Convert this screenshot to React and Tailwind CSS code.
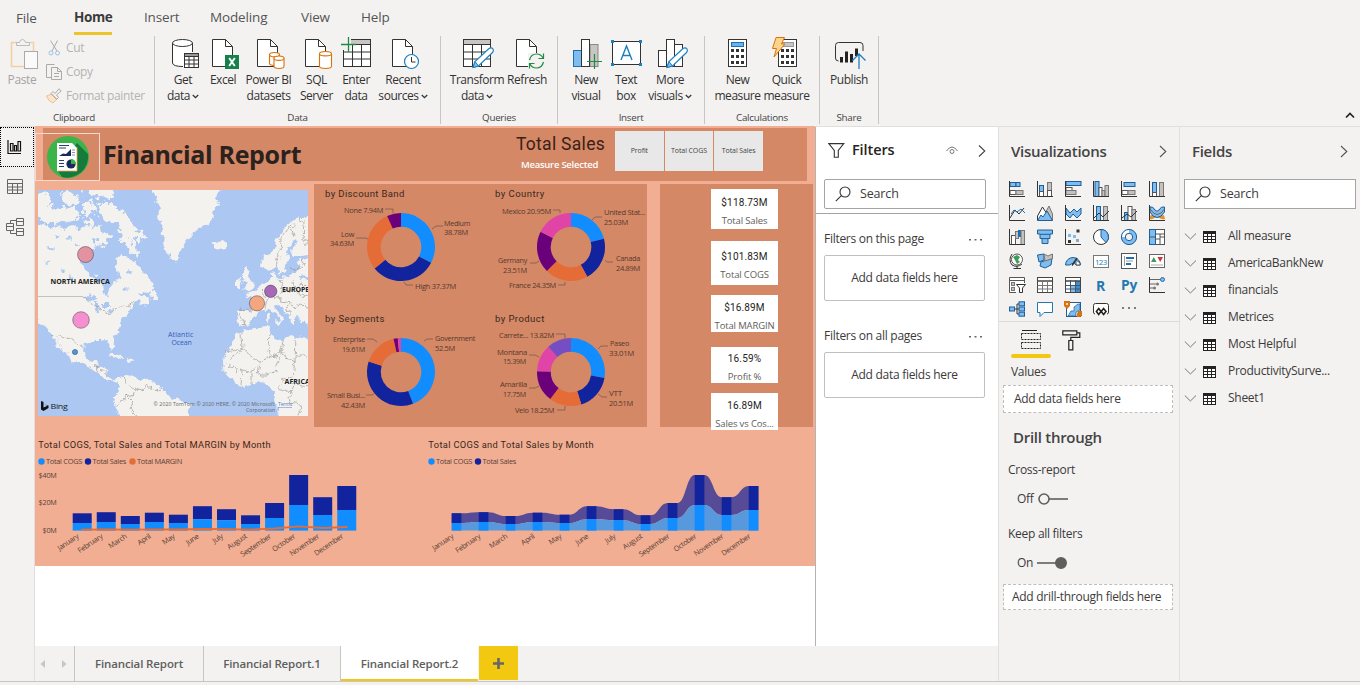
import React from "react";

const K = "#333";
const B = "#7fbcf0";
const G = "#c4c2c0";

/* ---------- shared bits ---------- */

function Chevron({ className = "", w = 8, h = 12, stroke = "#555" }) {
  return (
    <svg className={className} width={w} height={h} viewBox="0 0 8 12" fill="none" stroke={stroke} strokeWidth="1.1">
      <path d="M1 0.5 L6.8 6 L1 11.5" />
    </svg>
  );
}

function DownCaret() {
  return (
    <svg className="ml-[2px] inline-block" width="7" height="5" viewBox="0 0 7 5" fill="none" stroke="#333" strokeWidth="1.3">
      <path d="M0.8 1 L3.5 3.7 L6.2 1" />
    </svg>
  );
}

function SearchBox({ className }) {
  return (
    <div className={"flex items-center border border-[#a6a4a2] bg-white " + className}>
      <svg className="ml-[10px]" width="16" height="16" viewBox="0 0 16 16" fill="none" stroke="#333" strokeWidth="1.1">
        <circle cx="10" cy="6" r="5" />
        <path d="M6.4 9.6 L0.8 15.2" />
      </svg>
      <span className="ml-[9px] text-[12.5px] tracking-[-0.15px] text-[#3b3a39]">Search</span>
    </div>
  );
}

/* ---------- ribbon icons ---------- */

const Doc = ({ x = 0 }) => (
  <g transform={`translate(${x} 0)`} stroke={K} strokeWidth="1" fill="#fff">
    <path d="M0.5 1.5 H13.5 L20.5 8.5 V28.5 H0.5 Z" />
    <path d="M13.5 1.5 V8.5 H20.5" fill="none" />
  </g>
);

const Cyl = ({ x, y, w, h }) => (
  <g fill="#fff" stroke="#d9730d" strokeWidth="1.1">
    <path d={`M${x} ${y + 2.2} V${y + h - 2.2} Q${x} ${y + h} ${x + w / 2} ${y + h} Q${x + w} ${y + h} ${x + w} ${y + h - 2.2} V${y + 2.2}`} />
    <ellipse cx={x + w / 2} cy={y + 2.2} rx={w / 2} ry="2.2" />
  </g>
);

const Pencil = () => (
  <g>
    <path d="M10 29.5 L12 23.5 L26 10.5 Q28.5 9 30 11 Q31 13 29.5 14.5 L15.5 28 Z" fill="#fff" stroke="#1c7fc0" strokeWidth="1.2" />
    <path d="M10 29.5 L12 23.5 L15.5 28 Z" fill={B} stroke="#1c7fc0" />
  </g>
);

const Calc = ({ x = 0, top = "#69b2ee" }) => (
  <g transform={`translate(${x} 0)`}>
    <rect x="0.5" y="1.5" width="18" height="27" fill="#fff" stroke={K} />
    <rect x="3.5" y="4.5" width="12" height="4" fill={top} stroke={top === "#69b2ee" ? "#1c6fb0" : "#999"} />
    {[11, 17, 23].map((y) => [3, 8, 13].map((c) => <rect key={c + "-" + y} x={c} y={y} width="3" height="3" fill={K} />))}
  </g>
);

const Svg30 = ({ w = 30, children }) => (
  <svg width={w} height="32" viewBox={`0 0 ${w} 32`} fill="none" className="overflow-visible">
    {children}
  </svg>
);

const ribbonIcons = {
  get: (
    <Svg30 w={27}>
      <path d="M0.5 5 V25 Q2 28.5 10 28.5 H20.5 V5 Z" fill="#fff" />
      <path d="M0.5 5 V25 Q1 28.5 11 28.5 M20.5 5 V14" stroke={K} />
      <ellipse cx="10.5" cy="5" rx="10" ry="3.5" fill="#fff" stroke={K} />
      <rect x="12.5" y="15.5" width="14" height="14" fill="#fff" stroke={K} />
      <rect x="12.5" y="15.5" width="14" height="3" fill="#999" stroke={K} />
      <path d="M17 18.5 V29.5 M22 18.5 V29.5 M12.5 22 H26.5 M12.5 26 H26.5" stroke={K} />
    </Svg30>
  ),
  excel: (
    <Svg30 w={27}>
      <Doc />
      <rect x="13" y="17" width="14" height="14" fill="#15804a" />
      <path d="M17.2 20 L22.8 28 M22.8 20 L17.2 28" stroke="#fff" strokeWidth="1.9" />
    </Svg30>
  ),
  pbi: (
    <Svg30 w={27}>
      <Doc />
      <Cyl x={12.5} y={14.5} w={10} h={13} />
      <Cyl x={17} y={18} w={10} h={12.5} />
    </Svg30>
  ),
  sql: (
    <Svg30 w={27}>
      <Doc />
      <Cyl x={14.5} y={13.5} w={12} h={17} />
    </Svg30>
  ),
  enter: (
    <Svg30 w={28}>
      <rect x="0.5" y="1.5" width="27" height="27" fill="#fff" stroke={K} />
      <rect x="1" y="2" width="26" height="4" fill="#c8c6c4" />
      <path d="M0.5 6.5 H27.5 M0.5 14 H27.5 M0.5 21 H27.5 M9.5 6.5 V28.5 M18.5 6.5 V28.5" stroke={K} />
      <path d="M-2 -1 H8 V12 H-2 Z" fill="#f3f2f1" />
      <path d="M5.5 -1 V14 M-2 6.5 H13" stroke="#218a45" strokeWidth="1.3" />
    </Svg30>
  ),
  recent: (
    <Svg30 w={27}>
      <Doc />
      <circle cx="19.5" cy="23.5" r="7" fill="#fff" stroke="#1c7fc0" strokeWidth="1.2" />
      <path d="M19.5 19 V24 H23.5" stroke={K} />
    </Svg30>
  ),
  transform: (
    <Svg30 w={30}>
      <rect x="0.5" y="1.5" width="27" height="27" fill="#fff" stroke={K} />
      <rect x="1" y="2" width="26" height="4" fill="#c8c6c4" />
      <path d="M0.5 6.5 H27.5 M0.5 14 H27.5 M0.5 21 H27.5 M9.5 6.5 V28.5 M18.5 6.5 V28.5" stroke={K} />
      <Pencil />
    </Svg30>
  ),
  refresh: (
    <Svg30 w={27}>
      <Doc />
      <rect x="12" y="15" width="16" height="16" fill="#f3f2f1" />
      <path d="M13.5 22 Q15 16 20.5 16 Q25 16 27 20 M27.5 15.5 V20.5 H22.5 M27.5 24 Q26 30 20.5 30 Q16 30 14 26 M13.5 30.5 V25.5 H18.5" stroke="#218a45" strokeWidth="1.2" />
    </Svg30>
  ),
  newvis: (
    <Svg30 w={28}>
      <rect x="17" y="6.5" width="8" height="22" fill="#c8c6c4" stroke="#888" />
      <rect x="0.5" y="12.5" width="8" height="16" fill={B} stroke="#1c6fb0" />
      <rect x="8.5" y="1.5" width="8" height="27" fill="#fff" stroke={K} />
      <path d="M21.5 16 V31 M14 23.5 H29" stroke="#218a45" strokeWidth="1.2" />
    </Svg30>
  ),
  text: (
    <Svg30 w={31}>
      <rect x="1.5" y="3.5" width="28" height="23" fill="#fff" stroke={K} />
      {[[0, 2], [28, 2], [0, 25], [28, 25]].map(([a, b]) => (
        <rect key={a + "-" + b} x={a} y={b} width="3" height="3" fill="#1c7fc0" />
      ))}
      <path d="M10 22 L15.5 8 L21 22 M12 17.5 H19" stroke="#1c7fc0" strokeWidth="1.4" />
    </Svg30>
  ),
  more: (
    <Svg30 w={30}>
      <rect x="16.5" y="6.5" width="8" height="22" fill="#fff" stroke={K} />
      <rect x="0.5" y="12.5" width="8" height="16" fill="#fff" stroke={K} />
      <rect x="8.5" y="1.5" width="8" height="27" fill="#fff" stroke={K} />
      <g transform="translate(-1 0)"><Pencil /></g>
    </Svg30>
  ),
  calc: <Svg30 w={19}><Calc /></Svg30>,
  quick: (
    <Svg30 w={26}>
      <Calc x={6} top="#c8c6c4" />
      <path d="M4 -0.5 H12.5 L9.5 6 H13 L2 19 L4.5 10.5 H0.5 Z" fill="#fbd38a" stroke="#d9730d" />
    </Svg30>
  ),
  publish: (
    <Svg30 w={29}>
      <path d="M3.5 23 Q0.5 23 0.5 20 V7.5 Q0.5 4.5 3.5 4.5 H25 Q28 4.5 28 7.5 V13" stroke={K} />
      <path d="M6.5 24.5 V19 M11.5 24.5 V13.5 M16.5 24.5 V16 M21.5 18 V10.5" stroke="#222" strokeWidth="3" />
      <path d="M24 31 V16 M17.5 22.5 L24 16 L30.5 22.5" stroke="#1c7fc0" strokeWidth="1.3" />
    </Svg30>
  ),
};

function RibbonItem({ icon, lines, caret, width, shift = "pl-[4px]" }) {
  return (
    <div className={"flex shrink-0 flex-col items-center pt-[2px] " + width}>
      <div className={"h-[34px] " + shift}>{ribbonIcons[icon]}</div>
      {lines.map((l, i) => (
        <div key={l} className="h-[16px] whitespace-nowrap text-[12px] leading-[16px] tracking-[-0.45px] text-[#333]">
          {l}
          {caret && i === 1 ? <DownCaret /> : null}
        </div>
      ))}
    </div>
  );
}

function RibbonGroup({ label, width, pad, children }) {
  return (
    <div className={"flex h-[88px] shrink-0 flex-col border-r border-[#c8c6c4] " + width}>
      <div className={"flex h-[77px] " + pad}>{children}</div>
      <div className="text-center text-[9.8px] leading-[13px] text-[#444]">{label}</div>
    </div>
  );
}

function Ribbon() {
  return (
    <div className="flex h-[90px] items-start">
      <RibbonGroup label={<span className="pr-[6px]">Clipboard</span>} width="w-[155px]" pad="">
        <div className="flex w-[44px] flex-col items-center pt-[2px]">
          <div className="h-[34px] pl-[5px]">
            <svg width="29" height="32" viewBox="0 0 29 32" fill="none">
              <path d="M7 4.5 H1.5 V28.5 H14 M20 4.5 H23.5 V13" stroke="#f3cfa4" strokeWidth="1.6" />
              <path d="M6.5 7.5 V4.5 H9.5 Q10 1.5 12.5 1.5 Q15 1.5 15.5 4.5 H19.5 V7.5 Z" stroke="#bbb" />
              <rect x="14.5" y="13.5" width="13" height="17" fill="#fafafa" stroke="#aaa" />
            </svg>
          </div>
          <div className="text-[12px] leading-[16px] tracking-[-0.35px] text-[#a5a3a1]">Paste</div>
        </div>
        <div className="flex flex-col text-[12px] tracking-[-0.35px] text-[#b5b3b1]">
          <div className="flex h-[24px] items-center gap-[4px] pl-[4px]">
            <svg width="14" height="16" viewBox="0 0 14 16" fill="none" stroke="#aaa">
              <path d="M2.500 0.500 L9 11 M9.500 0.500 L4 11" />
              <circle cx="3" cy="13" r="2" stroke="#9cc4e0" />
              <circle cx="9.500" cy="13" r="2" stroke="#9cc4e0" />
            </svg>
            <span>Cut</span>
          </div>
          <div className="flex h-[24px] items-center gap-[4px] pl-[2px]">
            <svg width="16" height="16" viewBox="0 0 16 16" fill="none" stroke="#aaa">
              <path d="M5 13.500 H0.500 V0.500 H8.500" />
              <path d="M5.500 3.500 H11.500 L15.500 7.500 V15.500 H5.500 Z M11.500 3.500 V7.500 H15.500 M8 9.500 H13 M8 12.500 H13" />
            </svg>
            <span>Copy</span>
          </div>
          <div className="flex h-[24px] items-center gap-[4px] pl-[2px]">
            <svg width="16" height="16" viewBox="0 0 16 16" fill="none">
              <path d="M0.500 8 L6 6 L11 11 L7 15 Q2 13 0.500 8 Z" fill="#fbe5cc" stroke="#eec08e" />
              <path d="M5 5.500 L7 3.500 L9 5.500 L13 0.800 L15.200 3 L10.500 7 L12.500 9.500 L10.500 11.500 Z" stroke="#aaa" />
            </svg>
            <span className="whitespace-nowrap">Format painter</span>
          </div>
        </div>
      </RibbonGroup>
      <RibbonGroup label="Data" width="w-[286px]" pad="pl-[8px]">
        <RibbonItem icon="get" lines={["Get", "data"]} caret width="w-[40px]" />
        <RibbonItem icon="excel" lines={["Excel"]} width="w-[40px]" />
        <RibbonItem icon="pbi" lines={["Power BI", "datasets"]} width="w-[51px]" />
        <RibbonItem icon="sql" lines={["SQL", "Server"]} width="w-[45px]" />
        <RibbonItem icon="enter" lines={["Enter", "data"]} width="w-[34px]" shift="pl-px" />
        <RibbonItem icon="recent" lines={["Recent", "sources"]} caret width="w-[60px]" />
      </RibbonGroup>
      <RibbonGroup label="Queries" width="w-[117px]" pad="pl-[6px]">
        <RibbonItem icon="transform" lines={["Transform", "data"]} caret width="w-[60px]" shift="pl-[2px]" />
        <RibbonItem icon="refresh" lines={["Refresh"]} width="w-[40px]" />
      </RibbonGroup>
      <RibbonGroup label="Insert" width="w-[147px]" pad="pl-[10px]">
        <RibbonItem icon="newvis" lines={["New", "visual"]} width="w-[36px]" shift="pl-[2px]" />
        <RibbonItem icon="text" lines={["Text", "box"]} width="w-[44px]" shift="" />
        <RibbonItem icon="more" lines={["More", "visuals"]} caret width="w-[44px]" shift="pl-[5px]" />
      </RibbonGroup>
      <RibbonGroup label="Calculations" width="w-[115px]" pad="pl-[8px]">
        <RibbonItem icon="calc" lines={["New", "measure"]} width="w-[49px]" shift="" />
        <RibbonItem icon="quick" lines={["Quick", "measure"]} width="w-[49px]" shift="pr-[4px]" />
      </RibbonGroup>
      <RibbonGroup label="Share" width="w-[59px]" pad="">
        <RibbonItem icon="publish" lines={["Publish"]} width="w-[58px]" shift="" />
      </RibbonGroup>
      <svg className="mt-[76px] mr-[5px] ml-auto" width="10" height="7" viewBox="0 0 10 7" fill="none" stroke="#222" strokeWidth="1.7">
        <path d="M1 5.500 L5 1.500 L9 5.500" />
      </svg>
    </div>
  );
}

/* ---------- map ---------- */

const land = [
  "M34 226 L44 224 50 229 58 226 66 229 72 226 80 230 86 225 93 229 100 226 103 234 98 240 93 239 96 247 90 252 84 255 79 262 84 267 88 272 96 277 101 285 103 294 107 296 109 288 113 283 120 279 117 269 116 260 121 255 127 257 134 261 139 266 143 272 149 278 155 284 151 291 145 293 139 292 143 296 150 296 148 303 142 305 138 301 132 306 128 313 122 320 120 328 113 337 114 345 112 350 108 345 106 340 98 341 91 341 84 344 83 352 86 359 92 362 97 358 98 362 94 366 101 367 106 369 107 376 112 379 118 379 123 378 122 383 114 381 106 379 98 373 91 368 82 364 72 361 65 352 60 343 52 336 46 329 40 322 34 316 Z",
  "M50 334 L54 336 60 344 66 352 67 355 61 349 55 342 Z",
  "M34 196 L45 192 52 197 48 204 56 208 64 207 72 214 70 222 60 221 52 225 43 222 34 214 Z",
  "M60 193 L68 191 77 195 80 201 72 205 64 202 Z",
  "M66 209 L74 207 79 214 75 222 68 219 Z",
  "M82 203 L88 200 95 204 93 213 87 217 82 212 Z",
  "M80 186 L113 186 112 196 104 199 93 196 85 191 Z",
  "M98 205 L107 202 116 207 125 211 130 219 134 227 142 234 144 240 138 243 131 237 136 250 139 257 130 251 124 243 119 238 122 230 116 222 108 222 100 217 Z",
  "M97 236 L104 232 110 236 109 243 102 246 97 243 Z",
  "M84 219 L92 220 94 225 87 227 Z",
  "M149 184 L222 184 218 192 216 199 219 205 212 211 213 218 208 224 199 229 191 235 185 242 180 252 177 260 172 261 167 253 163 243 164 235 161 228 162 222 157 219 159 211 158 203 155 196 Z",
  "M212 243 L216 241 219 242 224 240 228 244 226 249 220 250 214 248 Z",
  "M150 294 L154 290 158 295 160 300 153 300 Z",
  "M312 217 L300 217 292 221 285 227 278 238 273 250 263 257 261 265 266 271 272 269 276 266 279 273 283 274 286 266 288 259 287 251 292 242 296 239 297 243 291 251 292 257 299 257 312 254 Z",
  "M312 259 L301 260 296 262 299 267 295 271 289 276 281 278 276 277 275 272 271 273 271 280 264 284 259 288 254 291 246 293 247 297 253 300 253 307 252 311 240 311 237 313 239 324 245 326 250 324 254 318 259 312 265 309 269 307 274 312 279 317 280 322 284 318 276 309 274 304 277 304 284 311 289 316 291 323 294 325 294 319 299 315 300 322 312 325 Z",
  "M243 269 L248 268 247 274 251 279 254 286 252 289 243 290 246 285 243 280 Z",
  "M236 280 L241 278 243 283 241 287 236 287 Z",
  "M274 319 L280 321 279 324 275 322 Z",
  "M267 315 L270 315 269 321 267 320 Z",
  "M240 332 L246 330 255 327 268 326 270 330 269 335 275 338 283 342 286 337 294 336 301 338 312 339 312 420 281 420 277 408 274 399 275 391 270 386 262 382 252 385 245 387 237 385 230 378 224 370 223 362 225 354 232 344 235 336 Z",
  "M119 381 L125 375 135 376 141 379 150 380 157 384 163 388 168 396 178 400 188 402 192 406 189 412 186 420 121 420 117 409 113 402 115 396 119 391 Z",
  "M109 354 L116 354 124 358 121 359 112 356 Z",
  "M126 358 L133 359 134 362 127 361 Z",
];

const lakes = [
  "M84 299 L92 295 99 300 97 302 89 300 Z",
  "M96 303 L99 303 98 314 95 312 Z",
  "M101 303 L107 303 109 308 104 308 Z",
  "M107 312 L115 309 112 312 Z",
  "M70 273 L73 281 72 283 69 277 Z",
  "M45 246 L55 249 50 251 Z",
  "M44 262 L51 260 47 264 Z",
  "M297 277 L308 276 308 279 299 280 Z",
  "M55 234 L60 236 57 239 Z M66 238 L70 236 71 241 Z M76 243 L80 247 75 247 Z M60 268 L65 270 61 272 Z M48 214 L58 215 50 217 Z M104 211 L112 214 106 215 Z M124 287 L130 289 125 291 Z M128 270 L132 273 128 274 Z",
];

const borders =
  "M49 335 L60 336 66 339 73 338 77 345 83 348 M83 296 L91 303 101 309 109 314 117 309 123 306 128 307 135 302 M92 366 L96 364 98 370 103 371 107 376 M124 377 L128 385 136 389 134 396 126 395 123 402 117 406 M136 389 L144 391 148 386 155 391 162 388 M126 395 L133 402 130 410 138 416 M241 332 L242 349 225 352 M242 349 L260 362 252 371 242 370 M242 349 L228 360 M260 362 L271 357 268 345 270 335 M271 357 L280 353 283 341 M280 353 L295 362 296 337 M296 356 H308 M260 362 L258 375 267 375 275 370 280 356 M295 362 L293 376 282 381 277 388 M242 370 L241 385 M252 371 L252 384 M233 367 L240 370 M228 365 L237 372 M277 389 L291 392 295 383 308 386 M291 392 L288 402 300 404 299 415 M276 266 L280 253 281 239 290 226 295 225 M291 226 L294 237 M299 218 L304 221 303 239 308 246 M240 310 L252 312 M240 314 L244 326 M260 290 L268 297 265 308 M268 296 L277 298 282 291 280 279 M277 299 L290 302 293 308 301 304 308 307 M282 291 L292 290 301 283 308 286 M290 302 L286 310 293 316 M293 281 L297 293 308 297 M291 270 L301 268 304 260";

function WorldMap() {
  return (
    <svg className="block" width="270" height="226" viewBox="38 190 270 226">
      <filter id="coast" x="-5%" y="-5%" width="110%" height="110%">
        <feTurbulence type="fractalNoise" baseFrequency="0.16" numOctaves="3" seed="4" result="n" />
        <feDisplacementMap in="SourceGraphic" in2="n" scale="8" xChannelSelector="R" yChannelSelector="G" />
      </filter>
      <filter id="ragged" x="-5%" y="-5%" width="110%" height="110%">
        <feTurbulence type="fractalNoise" baseFrequency="0.18" numOctaves="3" seed="9" result="n" />
        <feDisplacementMap in="SourceGraphic" in2="n" scale="14" xChannelSelector="R" yChannelSelector="G" />
      </filter>
      <rect x="38" y="190" width="270" height="226" fill="#abc7f2" />
      <g filter="url(#coast)">
        <g fill="#f3f2ee">
          {land.map((d, i) => (i >= 2 && i <= 9 ? null : <path key={d} d={d} />))}
        </g>
        <g fill="#abc7f2">{lakes.map((d) => <path key={d} d={d} />)}</g>
        <path d={borders} fill="none" stroke="#8f8b87" strokeWidth="0.6" />
      </g>
      <g filter="url(#ragged)" fill="#f3f2ee">
        {land.slice(2, 10).map((d) => <path key={d} d={d} />)}
      </g>
      <path d="M38 296.500 H83" stroke="#c4c2be" strokeWidth="1" />
      <g stroke="#00000055" strokeWidth="1">
        <circle cx="85.500" cy="254.500" r="8" fill="#e293a1" />
        <circle cx="81" cy="320" r="8.300" fill="#f58fd0" />
        <circle cx="75" cy="352" r="2.600" fill="#4d97e8" />
        <circle cx="257" cy="303.300" r="7.600" fill="#f3a680" />
        <circle cx="270.700" cy="291.300" r="6.200" fill="#a868b8" />
      </g>
      <g fontFamily="Open Sans, sans-serif" fill="#222">
        <g fontSize="7" fontWeight="700">
          <text x="50.500" y="284" textLength="59">NORTH AMERICA</text>
          <text x="282" y="291.500" textLength="27">EUROPE</text>
          <text x="284.500" y="384" textLength="25">AFRICA</text>
        </g>
        <g fontSize="7" fill="#3c5cb8">
          <text x="168" y="337" textLength="25">Atlantic</text>
          <text x="171.500" y="345" textLength="20">Ocean</text>
        </g>
        <g fontSize="5.200" fill="#666">
          <text x="153.500" y="406" textLength="121">© 2020 TomTom © 2020 HERE, © 2020 Microsoft</text>
          <text x="278" y="406" textLength="14" fill="#5b7fc4" textDecoration="underline">Terms</text>
          <text x="246" y="412" textLength="29">Corporation</text>
        </g>
        <path d="M41 401 L43.500 402 V407.500 L47.500 405.800 L44.500 404.500 L48.500 405.500 V408 L43.500 411 L41 409.500 Z" fill="#111" />
        <text x="50.500" y="409" fontSize="8" textLength="17" lengthAdjust="spacingAndGlyphs">Bing</text>
      </g>
    </svg>
  );
}

/* ---------- donuts ---------- */

const palette = ["#118dff", "#12239e", "#e66c37", "#6b007b", "#e044a7", "#744ec2"];

function arc(a0, a1, R, r) {
  const p = (a, q) => `${(Math.sin(a) * q).toFixed(2)} ${(-Math.cos(a) * q).toFixed(2)}`;
  const big = a1 - a0 > Math.PI ? 1 : 0;
  return `M${p(a0, R)} A${R} ${R} 0 ${big} 1 ${p(a1, R)} L${p(a1, r)} A${r} ${r} 0 ${big} 0 ${p(a0, r)} Z`;
}

/* label tuple: text, x, y, textLength ; positions are relative to the centre */
const donuts = [
  {
    title: "by Discount Band", tw: 79,
    values: [38.78, 37.37, 34.63, 7.94],
    labels: [["None 7.94M", -57, -34, 39], ["Medium", 43, -21, 26], ["38.78M", 43, -12, 24], ["Low", -60, -10, 13], ["34.63M", -71, -1, 24], ["High 37.37M", 14, 42, 41]],
    leaders: "M-16 -38 H-8 V-34 M31 -18 L35 -21 H42 M-45 -9 H-35 L-33 -8 M3 35 L5 38 H12",
  },
  {
    title: "by Country", tw: 49,
    values: [25.03, 24.89, 24.35, 23.51, 20.95],
    labels: [["Mexico 20.95M", -69, -33, 49], ["United Stat...", 33, -32, 41], ["25.03M", 33, -22, 24], ["Canada", 45, 14, 24], ["24.89M", 45, 24, 24], ["Germany", -73, 16, 29], ["23.51M", -68, 26, 24], ["France 24.35M", -62, 41, 47]],
    leaders: "M-18 -37 H-11 V-34 M21 -27 L24 -30 H31 M34 13 L36 15 H42 M-41 16 H-35 L-32 14 M-13 38 H-6 V35",
  },
  {
    title: "by Segments", tw: 59,
    values: [52.5, 42.43, 19.61, 2.38, 1.81],
    labels: [["Enterprise", -68, -30, 32], ["19.61M", -59, -20, 23], ["Government", 34, -31, 40], ["52.5M", 34, -21, 20], ["Small Busi...", -74, 26, 38], ["42.43M", -60, 36, 24]],
    leaders: "M-34 -33 H-28 L-24 -30 M23 -31 L26 -33 H32 M-35 23 H-29 L-26 21",
  },
  {
    title: "by Product", tw: 49,
    values: [33.01, 20.51, 18.25, 17.75, 15.39, 13.82],
    labels: [["Carrete...  13.82M", -72, -34, 55], ["Paseo", 39, -26, 19], ["33.01M", 38, -16, 25], ["Montana", -74, -17, 30], ["15.39M", -68, -8, 23], ["Amarilla", -71, 15, 27], ["17.75M", -68, 25, 23], ["Velo 18.25M", -56, 41, 39], ["VTT", 38, 24, 13], ["20.51M", 38, 34, 24]],
    leaders: "M-15 -38 H-6 V-34 M27 -23 L30 -26 H37 M-42 -17 H-36 L-32 -15 M-42 16 H-36 L-32 14 M-14 38 H-6 V34 M27 22 L31 25 H36",
  },
];

function Donut({ title, tw, values, labels, leaders }) {
  const total = values.reduce((a, b) => a + b, 0);
  let acc = 0;
  return (
    <svg className="block overflow-visible" width="166" height="121" viewBox="0 0 166 121" fontFamily="Open Sans, sans-serif" fill="#553a2e">
      <text x="5" y="12.500" fontSize="9.500" fontFamily="Roboto, sans-serif" textLength={tw} fill="#3a2820">{title}</text>
      <g transform="translate(81 63)">
        {values.map((v, i) => {
          const a0 = (acc / total) * 2 * Math.PI;
          acc += v;
          return <path key={i} d={arc(a0, (acc / total) * 2 * Math.PI, 34, 20.3)} fill={palette[i]} />;
        })}
        <path d={leaders} fill="none" stroke="#7c5a4b" strokeWidth="0.8" />
        <g fontSize="7">
          {labels.map(([t, x, y, l]) => <text key={t} x={x} y={y} textLength={l} lengthAdjust="spacingAndGlyphs">{t}</text>)}
        </g>
      </g>
    </svg>
  );
}

/* ---------- monthly charts ---------- */

const months = ["January", "February", "March", "April", "May", "June", "July", "August", "September", "October", "November", "December"];
const salesTop = [513.3, 512.2, 516, 512.7, 514.7, 506.2, 509.2, 515.3, 503, 475, 497.2, 486];
const cogsTop = [523, 522, 524, 522, 523, 519.2, 520.2, 524, 518, 505, 515, 510];
const marginY = [529.7, 529.4, 529.7, 529.4, 529.5, 529, 529.2, 529.6, 528.5, 526.3, 528, 527];
const base = 530.6;

function MonthLabels({ x0, pitch }) {
  return months.map((m, i) => (
    <text key={m} transform={`translate(${x0 + i * pitch} 537.500) rotate(-34)`} textAnchor="end" fontSize="7.300">{m}</text>
  ));
}

function Legend({ x, items }) {
  return items.map(([t, c, dx, l]) => (
    <g key={t}>
      <circle cx={x + dx + 3} cy="461.500" r="3.200" fill={c} />
      <text x={x + dx + 7.5} y="464" fontSize="7.200" textLength={l} lengthAdjust="spacingAndGlyphs">{t}</text>
    </g>
  ));
}

function ColumnChart() {
  return (
    <svg className="block" width="390" height="138" viewBox="35 428 390 138" fontFamily="Open Sans, sans-serif" fill="#5a4238">
      <text x="38.300" y="447.700" fontSize="9.300" fontFamily="Roboto, sans-serif" textLength="232" fill="#3a2820">Total COGS, Total Sales and Total MARGIN by Month</text>
      <Legend x={38.5} items={[["Total COGS", "#118dff", 0, 36], ["Total Sales", "#12239e", 46.5, 33.5], ["Total MARGIN", "#e66c37", 91, 45]]} />
      <g fontSize="7.200">
        <text x="38.500" y="478" textLength="18">$40M</text>
        <text x="38.500" y="505" textLength="18">$20M</text>
        <text x="42.500" y="533" textLength="14">$0M</text>
      </g>
      {months.map((m, i) => (
        <g key={m}>
          <rect x={72.7 + i * 24.05} y={salesTop[i]} width="19" height={cogsTop[i] - salesTop[i]} fill="#12239e" />
          <rect x={72.7 + i * 24.05} y={cogsTop[i]} width="19" height={base - cogsTop[i]} fill="#118dff" />
        </g>
      ))}
      <polyline points={marginY.map((y, i) => `${82.2 + i * 24.05},${y}`).join(" ")} fill="none" stroke="#e66c37" strokeWidth="1.800" strokeLinecap="round" />
      <MonthLabels x0={79.2} pitch={24.05} />
    </svg>
  );
}

function band(top, bottom) {
  const x = (i) => 451.7 + i * 27;
  let d = `M${x(0)} ${top[0]}`;
  for (let i = 0; i < 12; i++) {
    d += ` H${x(i) + 9.7}`;
    if (i < 11) d += ` C${x(i) + 18} ${top[i]} ${x(i) + 18.7} ${top[i + 1]} ${x(i + 1)} ${top[i + 1]}`;
  }
  d += ` V${bottom[11]}`;
  for (let i = 11; i >= 0; i--) {
    d += ` H${x(i)}`;
    if (i > 0) d += ` C${x(i) - 8.3} ${bottom[i]} ${x(i) - 9} ${bottom[i - 1]} ${x(i - 1) + 9.7} ${bottom[i - 1]}`;
  }
  return d + " Z";
}

function RibbonChart() {
  return (
    <svg className="block" width="390" height="138" viewBox="425 428 390 138" fontFamily="Open Sans, sans-serif" fill="#5a4238">
      <text x="428.300" y="447.700" fontSize="9.300" fontFamily="Roboto, sans-serif" textLength="165" fill="#3a2820">Total COGS and Total Sales by Month</text>
      <Legend x={428.5} items={[["Total COGS", "#118dff", 0, 36], ["Total Sales", "#12239e", 46.5, 33.5]]} />
      <path d={band(salesTop, cogsTop)} fill="#574b97" />
      <path d={band(cogsTop, cogsTop.map(() => base))} fill="#5899de" />
      {months.map((m, i) => (
        <g key={m}>
          <rect x={451.7 + i * 27} y={salesTop[i]} width="9.700" height={cogsTop[i] - salesTop[i]} fill="#12239e" />
          <rect x={451.7 + i * 27} y={cogsTop[i]} width="9.700" height={base - cogsTop[i]} fill="#118dff" />
        </g>
      ))}
      <MonthLabels x0={454} pitch={27} />
    </svg>
  );
}

/* ---------- report page ---------- */

const cards = [
  ["$118.73M", "Total Sales", "h-[40px] pt-[5px]"],
  ["$101.83M", "Total COGS", "mt-[12px] h-[44px] pt-[7px]"],
  ["$16.89M", "Total MARGIN", "mt-[10px] h-[37px] pt-[4px]"],
  ["16.59%", "Profit %", "mt-[15px] h-[36px] pt-[3px]"],
  ["16.89M", "Sales vs Cos...", "mt-[10px] h-[37px] pt-[4px]"],
];

function ReportPage() {
  return (
    <div className="h-[440px] w-[780px] bg-[#f1ae92] pt-[2px]">
      <div className="flex h-[53px] w-[772px] items-start bg-[#d48866]">
        <div className="h-full w-[8px] shrink-0 bg-[#f1ae92]" />
        <div className="-ml-[8px] mt-[5px] flex h-[48px] w-[65px] shrink-0 items-center justify-center border border-[#f7d9cb]">
          <svg width="44" height="44" viewBox="0 0 44 44">
            <circle cx="22" cy="22" r="21" fill="#3bb44a" />
            <path d="M31 8 L42 19 A21 21 0 0 1 16 42 L12 36 Z" fill="#157a3c" />
            <path d="M11 8 H26 L31 13 V36 H11 Z" fill="#fff" />
            <path d="M31 12 V36 H12" fill="none" stroke="#f2a34a" strokeWidth="0.8" />
            <path d="M13 10.500 H23 M13 13 H20 M13 25.500 H18 M13 28.500 H18 M13 31.500 H18" stroke="#2d3e6e" strokeWidth="1" />
            <path d="M13 21 L17 18.500 L20 19 L25 14 V21 Z" fill="#1b2a5c" />
            <path d="M26 15 H29 M26 17.500 H29 M26 20 H29" stroke="#8a94b5" />
            <circle cx="25" cy="29" r="4.600" fill="#1b2a5c" />
            <path d="M25 29 V24 A5 5 0 0 1 30 29 Z" fill="#3bb44a" />
          </svg>
        </div>
        <div className="ml-[3px] mt-[9px] w-[371px] text-[25px] leading-[34px] font-bold tracking-[-0.35px] text-[#2b211d]">Financial Report</div>
        <div className="mt-[6px] w-[170px] pl-[3px] text-center">
          <div className="font-[Roboto] text-[17.500px] leading-[20px] tracking-[0.300px] text-[#3a2118]">Total Sales</div>
          <div className="mt-[5px] pr-[2px] text-[9.500px] leading-[12px] font-semibold tracking-[-0.250px] text-white">Measure Selected</div>
        </div>
        <div className="mt-[3px] -ml-[29px] flex w-[148px] gap-px">
          {["Profit", "Total COGS", "Total Sales"].map((t) => (
            <div key={t} className="flex h-[40px] flex-1 items-center justify-center bg-[#e9e8e8] text-[7px] tracking-[-0.100px] whitespace-nowrap text-[#444]">{t}</div>
          ))}
        </div>
      </div>
      <div className="mt-[3px] flex h-[244px]">
        <div className="ml-[3px] mt-[6px]"><WorldMap /></div>
        <div className="ml-[6px] grid h-[243px] w-[333px] grid-cols-[170px_163px] grid-rows-[125px_118px] bg-[#d48866] pl-[6px]">
          {donuts.map((d) => <Donut key={d.title} {...d} />)}
        </div>
        <div className="ml-[13px] flex h-[243px] w-[153px] flex-col items-center bg-[#d48866] pt-[5px]">
          {cards.map(([v, l, c]) => (
            <div key={l} className={"ml-[16px] w-[67px] shrink-0 bg-white text-center " + c}>
              <div className="font-[Roboto] text-[10px] leading-[18px] tracking-[0.150px] text-[#252423]">{v}</div>
              <div className="text-[9.500px] leading-[18px] tracking-[-0.150px] whitespace-nowrap text-[#605e5c]">{l}</div>
            </div>
          ))}
        </div>
      </div>
      <div className="flex">
        <ColumnChart />
        <RibbonChart />
      </div>
    </div>
  );
}

/* ---------- side panes ---------- */

function FiltersPane() {
  return (
    <div className="flex w-[183px] shrink-0 flex-col border-l border-[#b5b3b1] bg-white">
      <div className="flex h-[87px] flex-col border-b border-[#a6a4a2]">
        <div className="mt-[11px] flex h-[24px] items-center pl-[12px]">
          <svg width="17" height="15" viewBox="0 0 17 15" fill="none" stroke="#333" strokeWidth="1.1">
            <path d="M0.800 0.600 H15.800 L10.300 7.500 V14.200 H6.300 V7.500 Z" />
          </svg>
          <span className="ml-[7px] w-[94px] text-[14.500px] font-semibold tracking-[-0.100px] text-[#252423]">Filters</span>
          <svg width="12" height="9" viewBox="0 0 12 9" fill="none" stroke="#777">
            <path d="M0.500 5 Q6 -3 11.500 5" />
            <circle cx="6" cy="5.500" r="2" />
          </svg>
          <Chevron className="mt-px ml-[20px]" stroke="#444" />
        </div>
        <SearchBox className="mt-[17px] ml-[8px] h-[30px] w-[162px] shrink-0 rounded-[2px]" />
      </div>
      {["Filters on this page", "Filters on all pages"].map((t, i) => (
        <div key={t} className={"ml-[8px] h-[97px] " + (i ? "" : "mt-[15px]")}>
          <div className="flex h-[20px] w-[158px] items-center justify-between text-[12px] text-[#3b3a39]">
            <span>{t}</span>
            <svg width="13" height="3" viewBox="0 0 13 3" fill="#666"><path d="M0 1 H2 V2.500 H0 Z M5.500 1 H7.500 V2.500 H5.500 Z M11 1 H13 V2.500 H11 Z" /></svg>
          </div>
          <div className="mt-[6px] flex h-[46px] w-[161px] items-center justify-center rounded-[2px] border border-[#c2c0be] text-[12px] text-[#3b3a39]">Add data fields here</div>
        </div>
      ))}
    </div>
  );
}

const Ax = () => <path d="M0.500 0 V15.500 H16" stroke={K} fill="none" />;
const bs = { fill: B, stroke: "#1f5f96" };
const gs = { fill: G, stroke: "#777" };
const ws = { fill: "#fff", stroke: "#555" };

const vizIcons = [
  <><rect x="1" y="1.500" width="6" height="4" {...bs} /><rect x="7" y="1.500" width="4" height="4" {...bs} /><rect x="1" y="9.500" width="6" height="4" {...ws} /><rect x="7" y="9.500" width="7" height="4" {...gs} /><Ax /></>,
  <><rect x="2.500" y="4.500" width="4" height="6" {...bs} /><rect x="2.500" y="10.500" width="4" height="5" {...ws} /><rect x="10.500" y="1.500" width="4" height="8" {...gs} /><rect x="10.500" y="9.500" width="4" height="6" {...ws} /><Ax /></>,
  <><rect x="1" y="0.500" width="15" height="4" {...bs} /><rect x="1" y="6.500" width="6" height="3" {...ws} /><rect x="1" y="9.500" width="10" height="4" {...gs} /><Ax /></>,
  <><rect x="2" y="0.500" width="4" height="15" {...bs} /><rect x="6" y="6.500" width="3" height="9" {...ws} /><rect x="9" y="9.500" width="3" height="6" {...gs} /><rect x="12" y="4.500" width="3.500" height="11" {...gs} /><Ax /></>,
  <><rect x="3" y="1.500" width="11" height="4" {...bs} /><rect x="1" y="9.500" width="6" height="4" {...ws} /><rect x="7" y="9.500" width="7" height="4" {...gs} /><Ax /></>,
  <><rect x="3.500" y="1.500" width="4" height="10" {...bs} /><rect x="3.500" y="11.500" width="4" height="4" {...ws} /><rect x="10.500" y="1.500" width="4" height="14" {...gs} /><Ax /></>,
  <><Ax /><path d="M1 13 L6 5 L10 9 L15 3" stroke={K} fill="none" /><path d="M2 9 L5 5 L8 7 L12 4 L16 8" stroke="#1c6fb0" fill="none" /></>,
  <><path d="M6 12 L12 1 L15.500 9 V15 H8 Z" fill={G} stroke="#777" /><path d="M0.500 11 L5.500 2 L10 9 L6 15 H0.500 Z" fill="#fff" stroke={K} /><path d="M0.500 15.500 L4 10 L6 12 L10 6 L15.500 15.500 Z" {...bs} /></>,
  <><path d="M1 3 L5 8 L9 4 L12 7 L16 3 V9 L12 13 L8 9 L5 13 L1 9 Z" {...bs} /><Ax /></>,
  <><rect x="3.500" y="1.500" width="4" height="14" {...bs} /><rect x="10.500" y="1.500" width="4" height="14" {...gs} /><path d="M1 13 L6 8 L10 12 L16 6" stroke={K} fill="none" /><Ax /></>,
  <><rect x="3.500" y="7.500" width="3.500" height="8" {...bs} /><rect x="7" y="1.500" width="4" height="14" {...ws} /><rect x="11" y="4.500" width="3.500" height="11" {...gs} /><path d="M1 13 L6 9 L10 12 L16 6" stroke={K} fill="none" /><Ax /></>,
  <><path d="M1 12 Q4 13 6 10 Q8 7 10 10 Q12 13 15.500 12" stroke="#e0942a" strokeWidth="4" fill="none" /><path d="M1 2 Q4 1 6 5 Q8 7.500 10 5 Q12 1 15.500 2 V7 Q12 12.500 8 12.500 Q4 12.500 1 7 Z" {...bs} /><path d="M1 4 Q5 9.500 8 9.500 Q12 9.500 15.500 4" stroke="#666" fill="none" /><Ax /></>,
  <><rect x="2.500" y="6.500" width="4" height="9" {...ws} /><rect x="6.500" y="2.500" width="3" height="7" {...gs} /><rect x="9" y="1" width="3" height="7" fill="#1c6fb0" /><rect x="12" y="1.500" width="3.500" height="14" {...gs} /><Ax /></>,
  <><path d="M0.500 1 H15.500 V5 H13 V9.500 H11 V14.500 H5 V9.500 H3 V5 H0.500 Z" {...bs} /><path d="M3 5.300 H13 M5 9.600 H11" stroke="#1f5f96" /></>,
  <><Ax /><rect x="11.500" y="0.500" width="3" height="3" fill="#333" /><rect x="3" y="5" width="3" height="3" fill={B} /><rect x="8" y="6" width="3" height="3" fill={B} /><rect x="3" y="11" width="3" height="3" fill="#333" /><rect x="11" y="10" width="3" height="3" fill="#88a8c4" /></>,
  <><circle cx="8" cy="8" r="7.500" fill="#fff" stroke={K} /><path d="M8 0.500 A7.500 7.500 0 0 1 13 13.600 L8 8 Z" {...bs} /></>,
  <><circle cx="8" cy="8" r="5.700" fill="none" stroke={B} strokeWidth="4" /><path d="M8 2.300 A5.700 5.700 0 0 0 2.300 8" fill="none" stroke="#fff" strokeWidth="3.500" /><circle cx="8" cy="8" r="7.600" fill="none" stroke="#1f5f96" /><circle cx="8" cy="8" r="3.700" fill="none" stroke="#1f5f96" /></>,
  <><rect x="0.500" y="0.500" width="15" height="15" {...ws} /><rect x="0.500" y="0.500" width="6" height="15" {...bs} /><path d="M0.500 8 H6.500 M6.500 5 H15.500 M11 5 V15.500 M6.500 10 H11 M11 8 H15.500" stroke="#555" fill="none" /></>,
  <><circle cx="8" cy="6.500" r="5.500" fill="#fff" stroke="#555" /><path d="M4 4 L8 2 L11 4 L9 7 L11 9 L8 11 L6 7 Z" fill="#3f9c5a" /><path d="M3 1 Q-1 7 3 12 Q8 15 13 11 M8 13 V15.500 M4.500 15.500 H12" stroke={K} fill="none" /></>,
  <><path d="M0.500 2 L7 1 V7 L2 9 Z M7 8 L15 5.500 L14 12 L8 15 L3 13 L4 9 Z" {...bs} /><path d="M7 1 L11 3 L15.500 1 V5.500 L8 8 Z" {...gs} /></>,
  <><path d="M0.500 12 A7.500 7.500 0 0 1 15.500 12 H11 A3.500 3.500 0 0 0 5 12 Z" {...bs} /><path d="M7 12.500 L12 5" stroke={K} strokeWidth="1.500" /><path d="M11 7 L15 10 V12 H11 Z" fill="#fff" stroke="#555" /></>,
  <><rect x="0.500" y="2.500" width="15" height="12" fill="#fff" stroke="#777" /><text x="2" y="11.500" fontSize="8" fill="#1c7fc0" textLength="12" fontFamily="Open Sans, sans-serif">123</text></>,
  <><rect x="0.500" y="0.500" width="15" height="15" fill="#fff" stroke="#555" /><path d="M3.500 3 V13" stroke="#999" /><path d="M5 5 H13 M5 11 H10" stroke="#1c6fb0" strokeWidth="2" /><path d="M5 8 H12" stroke="#999" /></>,
  <><rect x="0.500" y="1.500" width="15" height="13" fill="#fff" stroke="#666" /><path d="M2 9 L4.800 4 L7.500 9 Z" fill="#3f9c5a" /><path d="M8.500 4 H14 L11.200 9 Z" fill="#d13438" /><path d="M2 12 H14" stroke="#aaa" /></>,
  <><path d="M7 15.500 H0.500 V0.500 H15.500 V6" fill="#fff" stroke="#555" /><path d="M0.500 3.500 H15.500" stroke="#555" /><rect x="2.500" y="5.500" width="3" height="3" {...gs} /><rect x="2.500" y="10.500" width="3" height="3" {...gs} /><path d="M7.500 7.500 H16.500 L13.500 11 V15.500 H10.500 V11 Z" fill="#fff" stroke="#333" /></>,
  <><rect x="0.500" y="0.500" width="15" height="15" fill="#fff" stroke="#444" /><path d="M0.500 4 H15.500" stroke="#444" strokeWidth="1.500" /><path d="M0.500 8.500 H15.500 M0.500 12 H15.500 M5.500 3 V15 M10.500 3 V15" stroke="#777" /></>,
  <><rect x="0.500" y="0.500" width="15" height="15" fill="#fff" stroke="#444" /><rect x="5" y="8" width="10" height="7" fill={B} /><rect x="10" y="4" width="5" height="11" fill="#3f8ed0" /><path d="M0.500 4 H15.500" stroke="#444" strokeWidth="1.500" /><path d="M0.500 8.500 H15.500 M0.500 12 H15.500 M5.500 3 V15 M10.500 3 V15" stroke="#456" /></>,
  <text x="3" y="13.500" fontSize="15" fontWeight="700" fill="#2378b0" textLength="9" lengthAdjust="spacingAndGlyphs" fontFamily="Open Sans, sans-serif">R</text>,
  <text x="0" y="12.500" fontSize="15" fontWeight="700" fill="#2378b0" textLength="16" lengthAdjust="spacingAndGlyphs" fontFamily="Open Sans, sans-serif">Py</text>,
  <><Ax /><path d="M1 2.500 H12 M1 7 H7 M1 11 H4" stroke="#666" /><circle cx="13.500" cy="2.500" r="2" fill={B} stroke="#1c6fb0" /><circle cx="8.500" cy="7" r="1.500" fill="#777" /><circle cx="5.500" cy="11" r="1.500" fill="#777" /></>,
  <><path d="M5 8 H8 M8 3 V13 M8 3 H10 M8 13 H10 M8 8 H10" stroke={K} fill="none" /><rect x="0.500" y="6" width="5" height="4" {...bs} /><rect x="10" y="0.800" width="5.500" height="4" {...bs} /><rect x="10" y="6" width="5.500" height="4" {...bs} /><rect x="10" y="11.200" width="5.500" height="4" {...bs} /></>,
  <path d="M0.500 1.500 H15.500 V11.500 H7 L3 15.500 V11.500 H0.500 Z" fill="#fff" stroke="#2378b0" />,
  <><rect x="1.500" y="1.500" width="14" height="14" fill="#fff" stroke="#1f5f96" /><path d="M3 15 L6 10 H9 V6 L13 3 H15 V9 L11 11 V15 Z" fill={B} stroke="#1f5f96" strokeWidth="0.700" /><path d="M-1 0 H5 V5 L2 8 L-1 5 Z" fill="#d9730d" /><path d="M13 10 H17 V15 L14 16 H12 V13 Z" fill="#d9730d" /><circle cx="2" cy="3" r="1" fill="#fff" /></>,
  <><path d="M2 13 Q0.500 13 0.500 11 V4.500 Q0.500 2.500 2.500 2.500 H13.500 Q15.500 2.500 15.500 4.500 V11 Q15.500 13 14 13" fill="#fff" stroke={K} /><path d="M5.700 7.500 L8 10.500 L5.700 13.500 L3.400 10.500 Z M10.600 7.500 L13 10.500 L10.600 13.500 L8.200 10.500 Z" fill="none" stroke="#222" strokeWidth="1.600" /></>,
  <g fill="#555"><circle cx="2" cy="7" r="1" /><circle cx="8" cy="7" r="1" /><circle cx="14" cy="7" r="1" /></g>,
];

function DashedWell({ children, className }) {
  return (
    <div className={"ml-[4px] flex w-[170px] items-center border border-dashed border-[#c0bebc] bg-white text-[12px] text-[#3b3a39] " + className}>{children}</div>
  );
}

function VisualizationsPane() {
  return (
    <div className="flex w-[182px] shrink-0 flex-col border-x border-[#e1dfdd] text-[12px] text-[#3b3a39]">
      <div className="mt-[11px] flex h-[26px] items-center justify-between pr-[12px] pl-[12px]">
        <span className="text-[15px] font-semibold text-[#444]">Visualizations</span>
        <Chevron h={13} />
      </div>
      <div className="mt-[17px] grid grid-cols-[repeat(6,28px)] grid-rows-[repeat(6,24px)] pl-[10px]">
        {vizIcons.map((ic, i) => (
          <svg key={i} width="17" height="17" viewBox="0 0 17 17" className="overflow-visible" fill="none">{ic}</svg>
        ))}
      </div>
      <div className="-mt-[4px] border-t border-[#dddbd9]" />
      <div className="mt-[8px] flex h-[24px] pl-[22px]">
        <svg width="21" height="20" viewBox="0 0 21 20" fill="none" stroke="#222">
          <path d="M1 0.500 H16" />
          <rect x="0.500" y="3.500" width="19" height="6" strokeDasharray="2 1" />
          <rect x="0.500" y="12.500" width="19" height="6" strokeDasharray="2 1" />
        </svg>
        <svg className="ml-[20px]" width="19" height="21" viewBox="0 0 19 21" fill="none" stroke="#222" strokeWidth="1.200">
          <path d="M0.800 0.800 H14.800 V4.800 H0.800 Z M14.800 2.800 H17.800 V7.300 H8.800 V10.500 M6.800 10.500 H10.800 V19.800 H6.800 Z" />
        </svg>
      </div>
      <div className="ml-[12px] h-[4px] w-[40px] rounded-[2px] bg-[#f2c811]" />
      <div className="mt-[6px] pl-[12px] leading-[16px]">Values</div>
      <DashedWell className="mt-[5px] h-[28px] pl-[10px]">Add data fields here</DashedWell>
      <div className="mt-[14px] pl-[14px] text-[15px] leading-[20px] font-semibold text-[#444]">Drill through</div>
      <div className="mt-[15px] pl-[9px] leading-[16px]">Cross-report</div>
      <div className="mt-[13px] flex h-[16px] items-center pl-[18px]">
        <span className="w-[21px]">Off</span>
        <svg width="30" height="12" viewBox="0 0 30 12" fill="none" stroke="#605e5c" strokeWidth="1.600">
          <circle cx="6" cy="6" r="5" /><path d="M11 6 H30" />
        </svg>
      </div>
      <div className="mt-[19px] pl-[9px] leading-[16px]">Keep all filters</div>
      <div className="mt-[13px] flex h-[16px] items-center pl-[18px]">
        <span className="w-[20px]">On</span>
        <svg width="30" height="12" viewBox="0 0 30 12" fill="#605e5c" stroke="#605e5c" strokeWidth="1.600">
          <path d="M0 6 H20" /><circle cx="24" cy="6" r="5.200" />
        </svg>
      </div>
      <DashedWell className="mt-[13px] h-[26px] pl-[8px] whitespace-nowrap">Add drill-through fields here</DashedWell>
    </div>
  );
}

function FieldsPane() {
  return (
    <div className="flex grow flex-col text-[12px] text-[#3b3a39]">
      <div className="mt-[11px] flex h-[26px] items-center justify-between pr-[12px] pl-[12px]">
        <span className="text-[15px] font-semibold text-[#444]">Fields</span>
        <Chevron h={13} />
      </div>
      <SearchBox className="mt-[15px] ml-[4px] h-[30px] w-[172px] shrink-0" />
      <div className="mt-[14px]">
        {["All measure", "AmericaBankNew", "financials", "Metrices", "Most Helpful", "ProductivitySurve...", "Sheet1"].map((f) => (
          <div key={f} className="flex h-[27px] items-center pl-[4px]">
            <svg width="13" height="7" viewBox="0 0 13 7" fill="none" stroke="#777"><path d="M0.800 0.500 L6.400 6 L12 0.500" /></svg>
            <svg className="ml-[6px]" width="13" height="12" viewBox="0 0 13 12" fill="none" stroke="#222">
              <rect x="0.500" y="0.500" width="12" height="11" fill="#fff" /><path d="M0.500 1.500 H12.500" strokeWidth="3" /><path d="M0.500 5.500 H12.500 M0.500 8.500 H12.500 M4.500 2 V11 M8.500 2 V11" />
            </svg>
            <span className="-mt-[2px] ml-[12px]">{f}</span>
          </div>
        ))}
      </div>
    </div>
  );
}

/* ---------- app ---------- */

function LeftRail() {
  return (
    <div className="flex w-[35px] shrink-0 flex-col items-center border-r border-[#e1dfdd]">
      <div className="flex h-[40px] w-[34px] items-center border border-dotted border-black pl-[6px]">
        <svg width="16" height="16" viewBox="0 0 16 16" fill="none" stroke="#111" strokeWidth="1.200">
          <path d="M1 1 V14.500 H14 M3.500 4.500 H6 V12 H3.500 Z M7.500 6.500 H9.500 V12 H7.500 Z M11 2.500 H13.500 V12 H11 Z" />
        </svg>
      </div>
      <svg className="mt-[12px] mr-[4px]" width="16" height="16" viewBox="0 0 16 16" fill="none" stroke="#666">
        <path d="M0.500 0.500 H15.500 V14.500 H0.500 Z M0.500 4.500 H15.500 M0.500 8 H15.500 M0.500 11 H15.500 M5.500 4.500 V14.500 M10.500 4.500 V14.500" />
      </svg>
      <svg className="mt-[23px] mr-[3px]" width="19" height="19" viewBox="0 0 19 19" fill="none" stroke="#666">
        <path d="M10.500 0.500 H17.500 V7.500 H10.500 Z M10.500 3.500 H17.500 M10.500 10.500 H17.500 V17.500 H10.500 Z M10.500 13.500 H17.500 M0.500 5.500 H7.500 V12.500 H0.500 Z M0.500 8.500 H7.500 M4.500 5 V2.500 H10 M4.500 13 V15.500 H10" />
      </svg>
    </div>
  );
}

function PageTabs() {
  return (
    <div className="flex h-[35px] items-stretch text-[11.500px] font-semibold tracking-[-0.120px] text-[#605e5c]">
      <div className="flex w-[40px] items-center gap-[17px] border-r border-[#c8c6c4] pl-[5px]">
        <svg width="5" height="8" viewBox="0 0 5 8" fill="#c8c6c4"><path d="M5 0 V8 L0.500 4 Z" /></svg>
        <svg width="5" height="8" viewBox="0 0 5 8" fill="#c8c6c4"><path d="M0 0 V8 L4.500 4 Z" /></svg>
      </div>
      <div className="flex w-[129px] items-center justify-center border-r border-[#c8c6c4] pt-px">Financial Report</div>
      <div className="flex w-[137px] items-center justify-center border-r border-[#c8c6c4] pt-px">Financial Report.1</div>
      <div className="flex w-[137px] items-center justify-center border-b-2 border-[#f2c811] bg-white pt-[3px]">Financial Report.2</div>
      <div className="ml-px flex h-[34px] w-[39px] items-center justify-center bg-[#f2c811] pt-px">
        <svg width="11" height="11" viewBox="0 0 11 11" stroke="#666" strokeWidth="2.600"><path d="M5.500 0 V11 M0 5.500 H11" /></svg>
      </div>
    </div>
  );
}

export default function App() {
  return (
    <div className="flex h-[685px] w-[1360px] flex-col overflow-hidden bg-[#f3f2f1] font-['Open_Sans',sans-serif] tracking-[-0.28px]">
      <div className="flex h-[36px] pt-[6px] text-[13.500px] tracking-[-0.150px] text-[#555]">
        <span className="ml-[16px] w-[58px] leading-[24px]">File</span>
        <span className="h-[29px] w-[38px] border-b-[3px] border-[#ecc52a] leading-[22px] font-bold tracking-[-0.400px] text-[#3b3b3b]">Home</span>
        <span className="ml-[32px] w-[66px] leading-[22px]">Insert</span>
        <span className="w-[91px] leading-[22px]">Modeling</span>
        <span className="w-[60px] leading-[22px]">View</span>
        <span className="leading-[22px]">Help</span>
      </div>
      <Ribbon />
      <div className="flex h-[555px] border-t border-[#e1dfdd]">
        <LeftRail />
        <div className="flex w-[963px] shrink-0 flex-col">
          <div className="flex h-[519px]">
            <div className="-mt-px w-[780px] shrink-0 bg-white"><ReportPage /></div>
            <FiltersPane />
          </div>
          <PageTabs />
        </div>
        <VisualizationsPane />
        <FieldsPane />
      </div>
      <div className="h-[4px] border-t border-[#c8c6c4]" />
    </div>
  );
}
